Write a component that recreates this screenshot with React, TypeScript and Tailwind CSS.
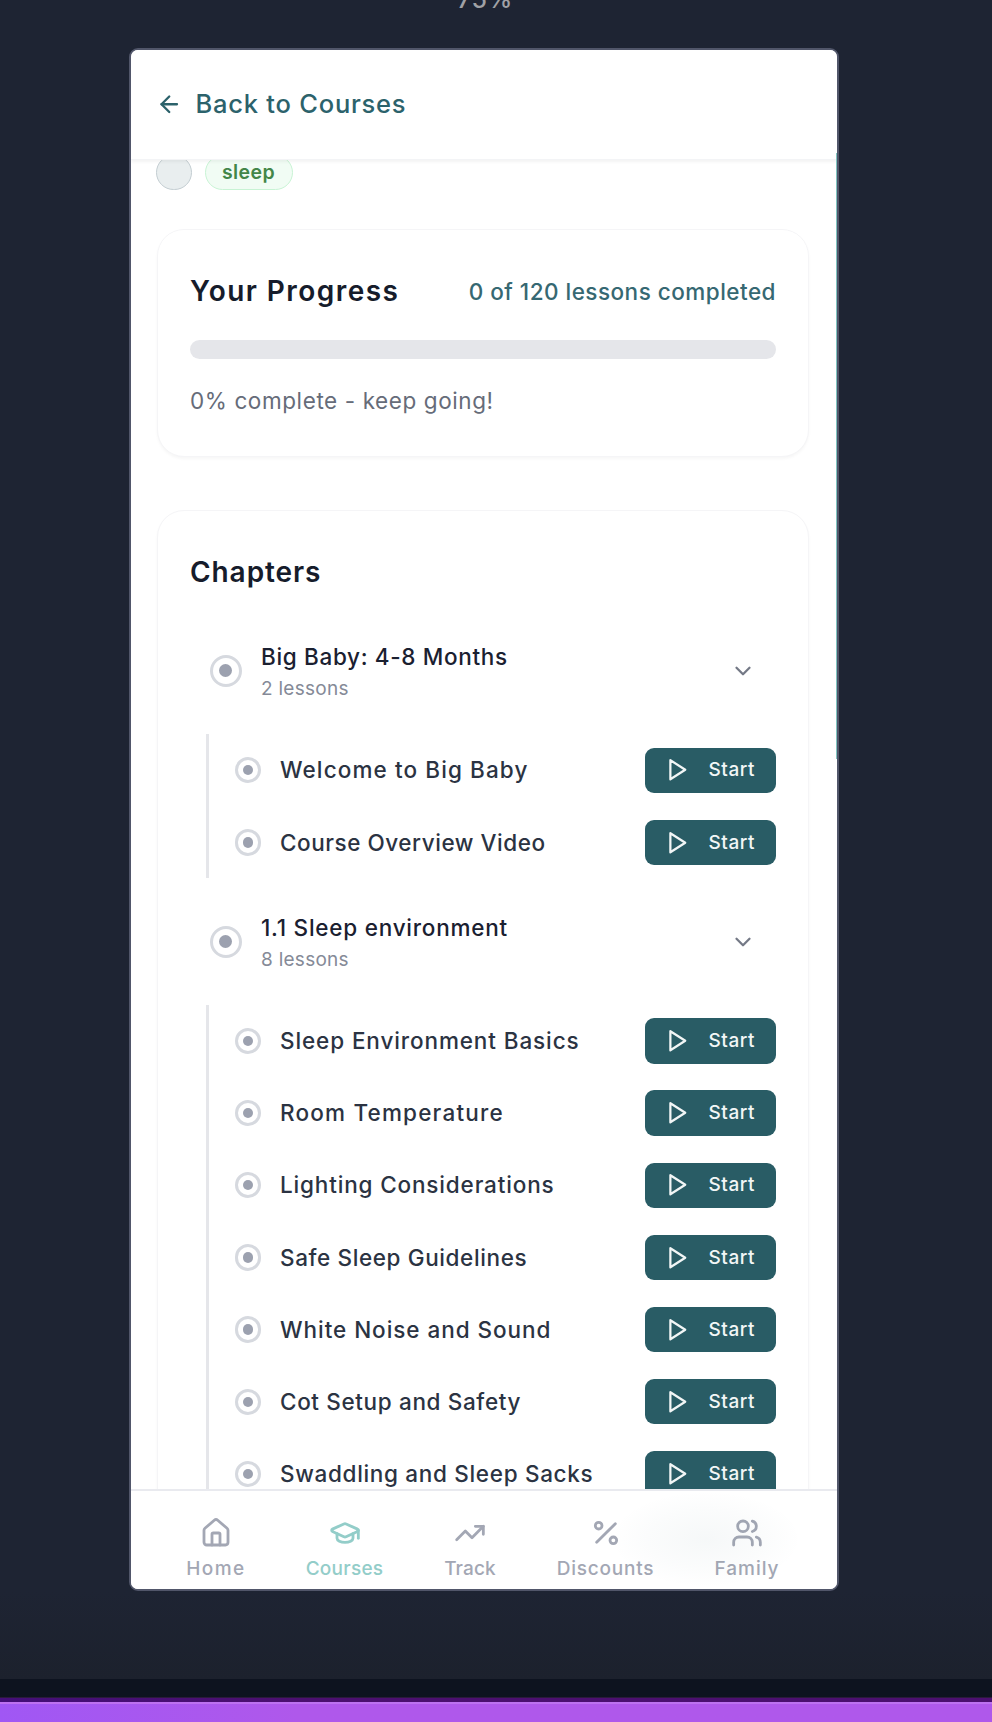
import type { ReactNode } from "react";
import { ArrowLeft, ChevronDown, House, GraduationCap, TrendingUp, Percent, Users } from "lucide-react";

type Lesson = { title: string; tracking: string };
type Chapter = { title: string; tracking: string; count: string; lessons: Lesson[] };

const chapters: Chapter[] = [
  {
    title: "Big Baby: 4-8 Months",
    tracking: "tracking-[0.0295em]",
    count: "2 lessons",
    lessons: [
      { title: "Welcome to Big Baby", tracking: "tracking-[0.049em]" },
      { title: "Course Overview Video", tracking: "tracking-[0.0244em]" },
    ],
  },
  {
    title: "1.1 Sleep environment",
    tracking: "tracking-[0.034em]",
    count: "8 lessons",
    lessons: [
      { title: "Sleep Environment Basics", tracking: "tracking-[0.0396em]" },
      { title: "Room Temperature", tracking: "tracking-[0.053em]" },
      { title: "Lighting Considerations", tracking: "tracking-[0.0373em]" },
      { title: "Safe Sleep Guidelines", tracking: "tracking-[0.0272em]" },
      { title: "White Noise and Sound", tracking: "tracking-[0.0423em]" },
      { title: "Cot Setup and Safety", tracking: "tracking-[0.0283em]" },
      { title: "Swaddling and Sleep Sacks", tracking: "tracking-[0.0302em]" },
    ],
  },
];

function PlayIcon() {
  return (
    <svg viewBox="0 0 24 24" fill="none" stroke="currentColor" strokeWidth="2.1" strokeLinecap="round" strokeLinejoin="round" className="size-[25.5px] shrink-0">
      <polygon points="6 3 20 12 6 21 6 3" />
    </svg>
  );
}

function LessonRow({ title, tracking }: Lesson) {
  return (
    <div className="flex h-[72.2px] items-center">
      <span className="flex size-[26.5px] shrink-0 items-center justify-center rounded-full border-3 border-[#d6d9df]">
        <span className="size-[10.5px] rounded-full bg-[#9ca1af]" />
      </span>
      <span className={`ml-[19px] flex-1 whitespace-nowrap text-[22.5px] font-medium text-[#2b3342] ${tracking}`}>{title}</span>
      <button className="flex h-[45.3px] w-[131.5px] items-center rounded-[9px] bg-[#295c65] pl-[19px] text-[#f2f6f6]">
        <PlayIcon />
        <span className="ml-[19.5px] pt-px text-[19px] font-medium tracking-[0.029em]">Start</span>
      </button>
    </div>
  );
}

function ChapterBlock({ chapter }: { chapter: Chapter }) {
  return (
    <section>
      <div className="flex h-[126.3px] items-center pl-[19.5px] pr-5">
        <span className="flex size-8 shrink-0 items-center justify-center rounded-full border-3 border-[#d6d9df]">
          <span className="size-[13px] rounded-full bg-[#9ca1af]" />
        </span>
        <div className="ml-[19.5px] flex-1 whitespace-nowrap pt-1">
          <h3 className={`text-[22.5px] leading-[33px] font-medium text-[#1a2030] ${chapter.tracking}`}>{chapter.title}</h3>
          <p className="text-[19px] leading-8 tracking-[0.014em] text-[#858a97]">{chapter.count}</p>
        </div>
        <ChevronDown className="size-[26px] text-[#747986]" strokeWidth={2.1} />
      </div>
      <div className="ml-4 border-l-3 border-[#e5e6ea] pl-[25.5px]">
        {chapter.lessons.map((l) => (
          <LessonRow key={l.title} {...l} />
        ))}
      </div>
    </section>
  );
}

function NavItem({ label, icon, className }: { label: string; icon: ReactNode; className: string }) {
  return (
    <div className={`flex shrink-0 flex-col items-center gap-2 whitespace-nowrap ${className}`}>
      {icon}
      <span className="text-[19px] leading-6 font-medium">{label}</span>
    </div>
  );
}

const cardClass = "rounded-[27px] border border-[#f5f5f7] bg-white pr-[31.5px] pl-[32.5px] shadow-[0_2px_3px_rgba(0,0,0,0.035)]";

export default function App() {
  return (
    <div className="flex h-[1722px] w-[992px] flex-col overflow-hidden bg-[#1e2433] font-['Inter',sans-serif]">
      <div className="ml-[129px] flex h-12 w-[712px] justify-center">
        <span className="-mt-[21px] text-[25px] leading-10 font-medium tracking-[0.02em] text-[#a0a1a5]">75%</span>
      </div>

      <main className="relative ml-[129px] flex h-[1543px] w-[710px] shrink-0 flex-col overflow-hidden rounded-[9px] border-2 border-[#51566a] bg-white">
        <header className="relative z-10 flex h-[110px] shrink-0 items-center border-b border-[#f3f4f6] bg-white pl-[25px] text-[#2c626b] shadow-[0_2px_3px_rgba(0,0,0,0.05)]">
          <ArrowLeft className="size-[26.5px]" strokeWidth={2.1} />
          <span className="ml-[13px] text-[25.5px] font-medium tracking-[0.03em]">Back to Courses</span>
        </header>

        <div className="min-h-0 flex-1 overflow-hidden pl-[25.5px] pr-[28.5px]">
          <div className="-ml-[0.5px] -mt-[5.5px] flex h-9 gap-[13px]">
            <span className="size-[35.5px] rounded-full border border-[#c3cdd1] bg-[#e9eeef]" />
            <span className="flex h-[35.5px] w-[88px] items-center justify-center rounded-full border border-[#c8f3d4] bg-[#f1fcf4] text-[19.5px] font-semibold tracking-[0.0208em] text-[#438648]">sleep</span>
          </div>

          <section className={`mt-[38px] h-[228.5px] pt-[41px] ${cardClass}`}>
            <div className="flex h-10 items-center justify-between whitespace-nowrap">
              <h2 className="text-[28px] font-semibold tracking-[0.052em] text-[#161c2b]">Your Progress</h2>
              <span className="pt-[2px] text-[22.5px] font-medium tracking-[0.0215em] text-[#366872]">0 of 120 lessons completed</span>
            </div>
            <div className="mt-[29.5px] h-[19px] rounded-full bg-[#e5e6ea]" />
            <p className="mt-[22px] text-[22.5px] leading-10 tracking-[0.0265em] text-[#666c79]">0% complete - keep going!</p>
          </section>

          <section className={`mt-[53px] h-[1100px] pt-[41px] ${cardClass}`}>
            <h2 className="text-[28px] leading-[41px] font-semibold tracking-[0.033em] text-[#161c2b]">Chapters</h2>
            <div className="mt-[14.8px]">
              {chapters.map((c) => (
                <ChapterBlock key={c.title} chapter={c} />
              ))}
            </div>
          </section>
        </div>

        <nav className="relative z-10 flex h-[100px] shrink-0 gap-[59px] overflow-hidden border-t-2 border-[#e9eaef] bg-white pl-[55px] pt-[25.5px] text-[#a3a7b4]">
          <div className="absolute top-0 left-[480px] h-[96px] w-[190px] bg-[radial-gradient(closest-side,rgba(41,92,101,0.045),rgba(41,92,101,0.02)_60%,transparent)]" />
          <NavItem label="Home" icon={<House className="size-8" strokeWidth={2.1} />} className="w-[60px] tracking-[0.09em]" />
          <NavItem label="Courses" icon={<GraduationCap className="size-8" strokeWidth={2.1} />} className="w-[79px] tracking-[0.0168em] text-[#93cdc9]" />
          <NavItem label="Track" icon={<TrendingUp className="size-8" strokeWidth={2.1} />} className="w-[54px] tracking-[0.0086em]" />
          <NavItem label="Discounts" icon={<Percent className="size-8" strokeWidth={2.1} />} className="w-[99px] tracking-[0.047em]" />
          <NavItem label="Family" icon={<Users className="size-8" strokeWidth={2.1} />} className="w-[66px] tracking-[0.0616em]" />
        </nav>

        <div className="absolute top-[103px] right-0 z-20 h-[606px] w-[1.5px] bg-[#7fc4c1]" />
      </main>

      <div className="h-[88px] shrink-0 bg-linear-to-b from-[#1e2433] to-[#1c212d]" />
      <div className="h-[18px] shrink-0 bg-[#0d131f]" />
      <div className="h-[5px] shrink-0 border-t border-[#2a1b3a] bg-linear-to-r from-[#430e78] to-[#4b0f70] to-30%" />
      <div className="flex-1 border-t-2 border-[#bd71f0] bg-linear-to-r from-[#a057f4] via-[#af58eb] via-30% to-[#af58eb]" />
    </div>
  );
}
